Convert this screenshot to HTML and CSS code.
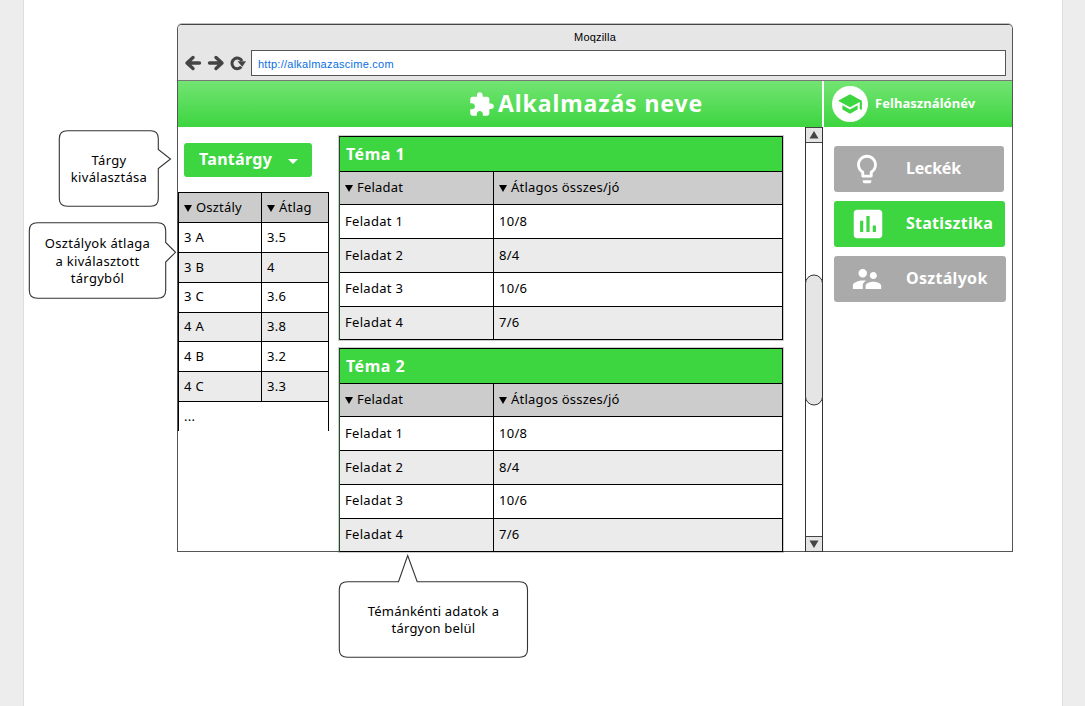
FILE: index.html
```html
<!DOCTYPE html>
<html lang="hu">
<head>
<meta charset="utf-8">
<title>Alkalmazás neve</title>
<link rel="stylesheet" href="styles.css">
</head>
<body>
<div class="sheet">
  <aside class="notes">
    <div class="callout callout-subject">
      <svg width="114" height="77" viewBox="0 0 114 77"><path d="M9.500 .8H92.500Q100.300 .8 100.300 8.600V19.500L112.500 29L100.300 38.500V68.500Q100.300 76.300 92.500 76.300H9.500Q1.300 76.300 1.300 68.500V8.600Q1.300 .8 9.500 .8Z"/></svg>
      <p>Tárgy<br>kiválasztása</p>
    </div>
    <div class="callout callout-classes">
      <svg width="149" height="77" viewBox="0 0 149 77"><path d="M9.500 .8H129.500Q137.700 .8 137.700 8.600V20.500L147.500 30.300L137.700 40V68.300Q137.700 76.300 129.500 76.300H9.500Q1.300 76.300 1.300 68.300V8.600Q1.300 .8 9.500 .8Z"/></svg>
      <p>Osztályok átlaga<br>a kiválasztott<br>tárgyból</p>
    </div>
  </aside>
  <div class="stage">
    <main class="window">
      <header class="chrome">
        <div class="chrome-title">Moqzilla</div>
        <div class="chrome-bar">
          <svg class="nav" width="64" height="18" viewBox="0 0 64 18">
            <g fill="none" stroke="#444" stroke-width="3.400" stroke-linecap="round" stroke-linejoin="round">
              <path d="M15.500 9H3.500M9 3.500L3 9L9 14.500"/>
              <path d="M25.500 9H37.500M32 3.500L38 9L32 14.500"/>
              <path d="M57.300 12.800A5.300 5.300 0 1 1 58 7" stroke-linecap="butt" stroke-width="3"/>
            </g>
            <path d="M53.500 7.200H62L58.300 12.700Z" fill="#444"/>
          </svg>
          <div class="url">http://alkalmazascime.com</div>
        </div>
      </header>
      <div class="appbar">
        <div class="brand">
          <svg width="27" height="27" viewBox="0 0 24 24"><path fill="#fff" d="M20.500 11H19V7c0-1.100-.9-2-2-2h-4V3.500C13 2.120 11.880 1 10.500 1S8 2.120 8 3.500V5H4c-1.100 0-1.990.9-1.990 2v3.800H3.500c1.490 0 2.700 1.210 2.700 2.700s-1.210 2.700-2.700 2.700H2V20c0 1.100.9 2 2 2h3.800v-1.500c0-1.490 1.210-2.700 2.700-2.700 1.490 0 2.700 1.210 2.700 2.700V22H17c1.100 0 2-.9 2-2v-4h1.500c1.380 0 2.500-1.120 2.500-2.500S21.880 11 20.500 11z"/></svg>
          <h1>Alkalmazás neve</h1>
        </div>
        <div class="user">
          <span class="avatar"><svg width="26" height="26" viewBox="0 0 24 24"><path fill="#3dd540" d="M5 13.180v4L12 21l7-3.820v-4L12 17l-7-3.820zM12 3L1 9l11 6 9-4.910V17h2V9L12 3z"/></svg></span>
          <span>Felhasználónév</span>
        </div>
      </div>
      <div class="content">
        <section class="classes">
          <button class="select">Tantárgy<span class="caret"></span></button>
          <div class="class-table">
            <div class="row head"><span><i></i>Osztály</span><span><i></i>Átlag</span></div>
            <div class="row"><span>3 A</span><span>3.5</span></div>
            <div class="row alt"><span>3 B</span><span>4</span></div>
            <div class="row raised"><span>3 C</span><span>3.6</span></div>
            <div class="row alt short"><span>4 A</span><span>3.8</span></div>
            <div class="row"><span>4 B</span><span>3.2</span></div>
            <div class="row alt"><span>4 C</span><span>3.3</span></div>
            <div class="row more"><span>...</span></div>
          </div>
        </section>
        <section class="topics">
          <div class="topic">
            <h2>Téma 1</h2>
            <div class="row head"><span><i></i>Feladat</span><span><i></i>Átlagos összes/jó</span></div>
            <div class="row"><span>Feladat 1</span><span>10/8</span></div>
            <div class="row alt"><span>Feladat 2</span><span>8/4</span></div>
            <div class="row raised"><span>Feladat 3</span><span>10/6</span></div>
            <div class="row alt last"><span>Feladat 4</span><span>7/6</span></div>
          </div>
          <div class="topic">
            <h2>Téma 2</h2>
            <div class="row head"><span><i></i>Feladat</span><span><i></i>Átlagos összes/jó</span></div>
            <div class="row"><span>Feladat 1</span><span>10/8</span></div>
            <div class="row alt"><span>Feladat 2</span><span>8/4</span></div>
            <div class="row raised"><span>Feladat 3</span><span>10/6</span></div>
            <div class="row alt last"><span>Feladat 4</span><span>7/6</span></div>
          </div>
        </section>
        <div class="scrollbar">
          <div class="arrow"><svg width="10" height="8" viewBox="0 0 10 8"><path d="M5 0L9.500 7.500H.5Z" fill="#444"/></svg></div>
          <div class="thumb"></div>
          <div class="arrow"><svg width="10" height="8" viewBox="0 0 10 8"><path d="M.5 .5H9.500L5 8Z" fill="#444"/></svg></div>
        </div>
        <nav class="menu">
          <a class="item lessons"><svg width="34" height="34" viewBox="0 0 24 24"><path fill="#fff" d="M9 21c0 .55.450 1 1 1h4c.55 0 1-.45 1-1v-1H9v1zm3-19C8.140 2 5 5.140 5 9c0 2.380 1.190 4.470 3 5.740V17c0 .55.450 1 1 1h6c.55 0 1-.45 1-1v-2.260c1.810-1.270 3-3.360 3-5.740 0-3.860-3.140-7-7-7zm2.850 11.100l-.85.600V16h-4v-2.300l-.85-.6C7.800 12.160 7 10.630 7 9c0-2.760 2.240-5 5-5s5 2.240 5 5c0 1.630-.8 3.160-2.150 4.100z"/></svg><span>Leckék</span></a>
          <a class="item stats"><svg width="38" height="38" viewBox="0 0 24 24"><path fill="#fff" d="M19 3H5c-1.100 0-2 .9-2 2v14c0 1.100.9 2 2 2h14c1.100 0 2-.9 2-2V5c0-1.100-.9-2-2-2zM9 17H7v-7h2v7zm4 0h-2V7h2v10zm4 0h-2v-4h2v4z"/></svg><span>Statisztika</span></a>
          <a class="item groups"><svg width="34" height="34" viewBox="0 0 24 24"><path fill="#fff" d="M16.500 12c1.380 0 2.490-1.120 2.490-2.500S17.880 7 16.500 7C15.120 7 14 8.120 14 9.500s1.120 2.500 2.500 2.500zM9 11c1.660 0 2.990-1.340 2.990-3S10.660 5 9 5C7.340 5 6 6.340 6 8s1.340 3 3 3zm7.500 3c-1.830 0-5.500.92-5.500 2.750V19h11v-2.250c0-1.830-3.670-2.750-5.500-2.750zM9 13c-2.330 0-7 1.170-7 3.500V19h7v-2.250c0-.85.330-2.340 2.370-3.470C10.500 13.100 9.660 13 9 13z"/></svg><span>Osztályok</span></a>
        </nav>
      </div>
    </main>
    <div class="callout callout-topics">
      <svg width="191" height="105" viewBox="0 0 191 105"><path d="M9.500 27.700H60.500L69.700 1.500L79.200 27.700H181.500Q189.500 27.700 189.500 35.500V95.500Q189.500 103.300 181.500 103.300H9.500Q1.300 103.300 1.300 95.500V35.500Q1.300 27.700 9.500 27.700Z"/></svg>
      <p>Témánkénti adatok a<br>tárgyon belül</p>
    </div>
  </div>
</div>
</body>
</html>
```

FILE: styles.css
```css
* { box-sizing: border-box; }
body {
  margin: 0;
  height: 706px;
  overflow: hidden;
  background: #ededed;
  font: 13px/17px "Noto Sans", sans-serif;
  letter-spacing: .3px;
  color: #000;
}
h1, h2, p { margin: 0; }
svg { display: block; }

.sheet {
  display: flex;
  width: 1040px;
  height: 706px;
  margin-left: 23px;
  background: #fff;
  border: solid #dedede;
  border-width: 0 1px;
}
.notes { flex: 0 0 153px; padding-top: 130px; }
.stage { flex: 0 0 836px; padding-top: 24px; }

/* Speech-bubble annotations */
.callout { display: grid; text-align: center; }
.callout > * { grid-area: 1 / 1; }
.callout path { fill: #fff; stroke: #333; stroke-width: 1.100; }
.callout p { z-index: 1; }
.callout-subject { width: 114px; margin-left: 34px; }
.callout-subject p { padding: 22px 12px 0 0; }
.callout-classes { width: 149px; margin: 15px 0 0 4px; }
.callout-classes p { padding: 13px 10px 0 0; line-height: 17.500px; }
.callout-topics { width: 191px; margin: 2px 0 0 161px; letter-spacing: .2px; }
.callout-topics p { padding-top: 49px; }

/* Browser window */
.window {
  height: 528px;
  border: 1px solid #555;
  border-top-color: #444;
  border-radius: 5px 5px 0 0;
  box-shadow: 0 -1px 0 rgba(0, 0, 0, .25);
}
.chrome {
  height: 56px;
  background: #e6e6e6;
  border-bottom: 1px solid #777;
  border-radius: 4px 4px 0 0;
  font: 11px/25px "Liberation Sans", sans-serif;
}
.chrome-title { height: 25px; text-align: center; letter-spacing: .2px; color: #000; }
.chrome-bar { display: flex; align-items: center; padding: 0 6px; }
.nav { flex: 0 0 64px; margin-right: 3px; }
.url {
  flex: 1;
  height: 26px;
  padding: 1px 0 0 6px;
  background: #fff;
  border: 1px solid #555;
  color: #0b6fe0;
  letter-spacing: .25px;
}

.appbar {
  display: flex;
  height: 46px;
  color: #fff;
  font-weight: 700;
}
.brand, .user {
  display: flex;
  align-items: center;
  background: linear-gradient(#73e473, #3dd540);
}
.brand { flex: 0 0 644px; padding-left: 290px; }
.brand h1 { margin-left: 3px; padding-bottom: 3px; font-size: 23px; line-height: 30px; letter-spacing: .9px; }
.user { flex: 1; margin-left: 2px; padding-left: 8px; letter-spacing: .05px; }
.user span:last-child { padding-bottom: 2px; }
.avatar {
  display: grid;
  place-items: center;
  width: 36px;
  height: 36px;
  margin-right: 7px;
  background: #fff;
  border-radius: 50%;
}

.content {
  display: grid;
  grid-template-columns: 161px 444px 1fr 18px 189px;
  height: 425px;
}

.select {
  display: flex;
  align-items: center;
  justify-content: space-between;
  width: 128px;
  height: 34px;
  margin: 15.500px 0 15.500px 6px;
  padding: 0 14px 1px 15px;
  border: 0;
  border-radius: 3px;
  background: #3dd540;
  color: #fff;
  font: 700 16px "Noto Sans", sans-serif;
  letter-spacing: .3px;
}
.caret { margin-top: 5px; border: 5px solid transparent; border-top-color: #fff; border-bottom: 0; }

/* Tables */
.row { display: flex; border-bottom: 1px solid #000; }
.row > span { display: flex; align-items: center; padding-left: 5px; }
.row > span:first-child:not(:last-child) { border-right: 1px solid #000; }
.row.alt { background: #ebebeb; }
.row.head { background: #ccc; letter-spacing: .2px; }
.row i {
  margin: 3px 4px 0 0;
  border: 4px solid transparent;
  border-top: 7px solid #000;
  border-bottom: 0;
}
.class-table { width: 151px; border: solid #000; border-width: 1px 1px 0; }
.class-table .row { height: 30px; }
.class-table .row.short { height: 29px; }
.class-table .row > span { flex: 1; padding-bottom: 1px; }
.class-table .row.raised > span { padding-bottom: 3px; }
.class-table .row > span:first-child { flex: 0 0 83px; }
.class-table .row.more { height: 29px; border: 0; }

.topics { display: flex; flex-direction: column; gap: 8px; padding-top: 9px; }
.topic { flex: none; border: solid #000; border-width: 1px 1px 0; border-left-color: #1d4d20; box-shadow: 0 0 0 1px rgba(0, 0, 0, .2); }
.topic h2 {
  height: 35px;
  padding-left: 6px;
  border-bottom: 1px solid #000;
  background: #3dd540;
  color: #fff;
  font-size: 16px;
  line-height: 34px;
  letter-spacing: .5px;
}
.topic .row { height: 34px; }
.topic .row.head, .topic .row.last { height: 33px; }
.topic .row > span:first-child { flex: 0 0 154px; }
.topic .raised > span, .topic .head > span, .topic .last > span { padding-bottom: 2px; }

.scrollbar {
  grid-column: 4;
  display: flex;
  flex-direction: column;
  justify-content: space-between;
  border: solid #333;
  border-width: 0 1px;
}
.arrow {
  display: grid;
  place-items: center;
  height: 16px;
  background: #e5e5e5;
  border: solid #444;
  border-width: 1px 0;
}
.thumb {
  height: 131px;
  margin: 0 -1px;
  background: #e5e5e5;
  border: 1px solid #333;
  border-radius: 9px;
  transform: translateY(.5px);
}

.menu { padding: 18.500px 0 0 11px; }
.item {
  display: flex;
  align-items: center;
  height: 46px;
  border-radius: 3px;
  background: #aaa;
  color: #fff;
  font-size: 16px;
  font-weight: 700;
}
.item + .item { margin-top: 9px; }
.item svg { flex: none; margin: 0 22px 0 16px; }
.lessons { width: 170px; letter-spacing: -.2px; }
.stats { width: 171px; letter-spacing: .25px; background: #3dd540; }
.stats svg { margin: 0 19px 0 15px; }
.groups { width: 172px; letter-spacing: .3px; }
```
